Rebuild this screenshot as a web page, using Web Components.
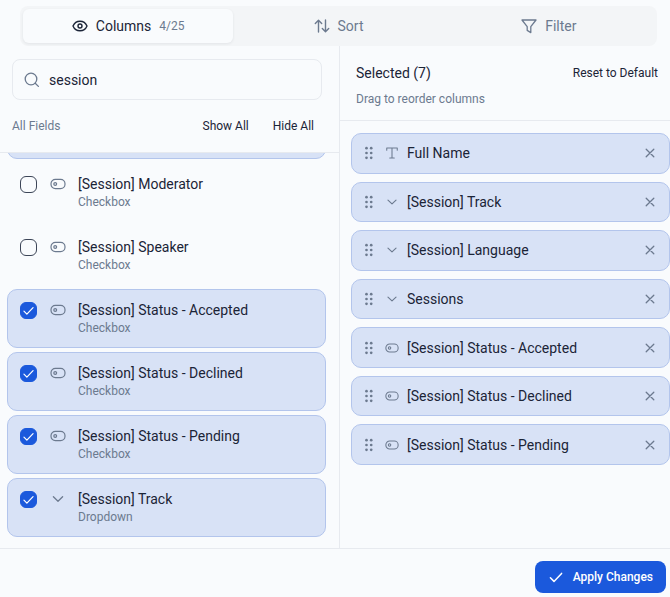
<!DOCTYPE html>
<html lang="en">
<head>
<meta charset="utf-8">
<title>Manage columns</title>
<style>
  :root {
    --bg: #f9fbfd;
    --line: #e7eaef;
    --ink: #1b2437;
    --muted: #6c7a8f;
    --accent: #1b59dc;
    --row: #d8e2f6;
    --row-line: #b3c5ec;
  }
  body { margin: 0; background: var(--bg); color: var(--ink); font: 14px/20px Roboto, "Liberation Sans", sans-serif; }
</style>
</head>
<body>
<column-dialog>
  <tab-bar slot="tabs">
    <tab-button icon="eye" active count="4/25">Columns</tab-button>
    <tab-button icon="sort">Sort</tab-button>
    <tab-button icon="filter">Filter</tab-button>
  </tab-bar>
  <fields-panel slot="fields" query="session">
    <field-row icon="chevron" kind="Dropdown" checked>[Session] Language</field-row>
    <field-row icon="toggle" kind="Checkbox">[Session] Moderator</field-row>
    <field-row icon="toggle" kind="Checkbox">[Session] Speaker</field-row>
    <field-row icon="toggle" kind="Checkbox" checked>[Session] Status - Accepted</field-row>
    <field-row icon="toggle" kind="Checkbox" checked>[Session] Status - Declined</field-row>
    <field-row icon="toggle" kind="Checkbox" checked>[Session] Status - Pending</field-row>
    <field-row icon="chevron" kind="Dropdown" checked>[Session] Track</field-row>
  </fields-panel>
  <selected-panel slot="selected">
    <selected-row icon="text">Full Name</selected-row>
    <selected-row icon="chevron">[Session] Track</selected-row>
    <selected-row icon="chevron">[Session] Language</selected-row>
    <selected-row icon="chevron">Sessions</selected-row>
    <selected-row icon="toggle">[Session] Status - Accepted</selected-row>
    <selected-row icon="toggle">[Session] Status - Declined</selected-row>
    <selected-row icon="toggle">[Session] Status - Pending</selected-row>
  </selected-panel>
  <apply-button slot="footer">Apply Changes</apply-button>
</column-dialog>

<script>
const ICONS = {
  eye: [16, 1.4, '<path d="M1 8c1.2-2.8 3.6-4.8 7-4.8S13.800 5.200 15 8c-1.200 2.800-3.600 4.800-7 4.800S2.200 10.800 1 8z"/><circle cx="8" cy="8" r="2"/>'],
  sort: [16, 1.4, '<path d="M4.500 14V2.500M1.300 5.500l3.200-3.200 3.200 3.200M11.500 2v11.500M8.300 10.500l3.200 3.200 3.200-3.200"/>'],
  filter: [16, 1.3, '<path d="M1 2h14L9.800 8.600v6l-3.600-2.200V8.600z"/>'],
  search: [16, 1.3, '<circle cx="7" cy="7" r="5.800"/><path d="M11.200 11.200l3.200 3.200"/>'],
  toggle: [16, 1.2, '<rect x="1" y="3.400" width="14" height="9.200" rx="4.400"/><circle cx="5.200" cy="8" r="1.400"/>'],
  chevron: [16, 1.3, '<path d="M3.400 5.800L8 10.200l4.600-4.400"/>'],
  text: [16, 1.2, '<path d="M2 4.800V2.200h12v2.600M8 2.200v11.600M5.400 13.800h5.200"/>'],
  close: [16, 1.3, '<path d="M4.200 4.200l7.600 7.600M11.800 4.200l-7.600 7.600"/>'],
  check: [16, 1.5, '<path d="M2.400 8.800l3.600 3.600 7.600-8"/>'],
  grip: [16, 0, '<g fill="currentColor"><circle cx="5.500" cy="3.200" r="1.350"/><circle cx="10.200" cy="3.200" r="1.350"/><circle cx="5.500" cy="8" r="1.350"/><circle cx="10.200" cy="8" r="1.350"/><circle cx="5.500" cy="12.800" r="1.350"/><circle cx="10.200" cy="12.800" r="1.350"/></g>']
};

class BaseElement extends HTMLElement {
  connectedCallback() {
    if (this.shadowRoot) return;
    this.attachShadow({ mode: 'open' }).innerHTML =
      '<style>*{box-sizing:border-box}button,input{font:inherit;color:inherit}button{border:0;background:none;padding:0;cursor:pointer}' +
      this.css() + '</style>' + this.html();
  }
}

customElements.define('line-icon', class extends BaseElement {
  css() { return ':host{display:block;flex:none;width:16px;height:16px}svg{display:block;width:100%;height:100%}'; }
  html() {
    const [box, stroke, shape] = ICONS[this.getAttribute('name')];
    return `<svg viewBox="0 0 ${box} ${box}" fill="none" stroke="currentColor" stroke-width="${stroke}" stroke-linecap="round" stroke-linejoin="round" aria-hidden="true">${shape}</svg>`;
  }
});

customElements.define('column-dialog', class extends BaseElement {
  css() { return `
    :host{display:flex;flex-direction:column;height:100vh;overflow:hidden}
    header{padding:6px 13px 0 20px}
    main{flex:1;min-height:0;display:grid;grid-template-columns:340fr 330fr;grid-template-rows:minmax(0,1fr)}
    footer{display:flex;justify-content:flex-end;padding:12px 4px 4px;border-top:1px solid var(--line)}`; }
  html() { return '<header><slot name="tabs"></slot></header><main><slot name="fields"></slot><slot name="selected"></slot></main><footer><slot name="footer"></slot></footer>'; }
});

customElements.define('tab-bar', class extends BaseElement {
  css() { return ':host{display:block}nav{display:grid;grid-template-columns:repeat(3,1fr);padding:3px;border-radius:8px;background:#f3f5f7}'; }
  html() { return '<nav><slot></slot></nav>'; }
});

customElements.define('tab-button', class extends BaseElement {
  css() { return `
    :host{display:block;color:var(--muted)}
    :host([active]){color:var(--ink)}
    button{display:flex;align-items:center;justify-content:center;gap:8px;width:100%;height:34px;border-radius:6px}
    :host([active]) button{background:var(--bg);box-shadow:0 1px 3px #1b243714}
    small{font-size:12px;color:var(--muted)}`; }
  html() {
    const count = this.getAttribute('count');
    return `<button type="button"><line-icon name="${this.getAttribute('icon')}"></line-icon><span><slot></slot></span>${count ? `<small>${count}</small>` : ''}</button>`;
  }
});

customElements.define('fields-panel', class extends BaseElement {
  css() { return `
    :host{display:flex;flex-direction:column;min-width:0;border-right:1px solid var(--line)}
    .top{padding:13px 17px 16px 12px;border-bottom:1px solid var(--line)}
    label{display:flex;align-items:center;gap:9px;height:41px;padding:0 11px;border:1px solid var(--line);border-radius:8px}
    label line-icon{color:var(--muted)}
    input{flex:1;min-width:0;border:0;outline:0;padding:0;background:none}
    .bar{display:flex;align-items:center;gap:24px;padding:16px 8px 0 0;font-size:12px}
    .bar span{flex:1;color:var(--muted)}
    .list{flex:1;min-height:0;overflow:hidden;display:flex;flex-direction:column;justify-content:flex-end;gap:4px;padding:0 13px 11px 7px}`; }
  html() { return `<div class="top"><label><line-icon name="search"></line-icon><input type="text" aria-label="Search fields" value="${this.getAttribute('query')}"></label>
    <div class="bar"><span>All Fields</span><button type="button">Show All</button><button type="button">Hide All</button></div></div>
    <div class="list"><slot></slot></div>`; }
});

customElements.define('field-row', class extends BaseElement {
  css() { return `
    :host{display:block;flex:none}
    label{display:grid;grid-template-columns:17px 17px 1fr;column-gap:12px;height:59px;padding:10px 12px;border:1px solid transparent;border-radius:10px}
    :host([checked]) label{background:var(--row);border-color:var(--row-line)}
    .box{display:grid;place-items:center;height:20px}
    .box > *{grid-area:1/1}
    input{appearance:none;width:17px;height:17px;margin:0;border:1px solid #3c4557;border-radius:6px}
    input:checked{background:var(--accent);border-color:var(--accent)}
    .box line-icon{width:13px;height:13px;color:#fff;visibility:hidden;pointer-events:none}
    input:checked + line-icon{visibility:visible}
    .kind{height:20px;display:grid;place-items:center;color:var(--muted)}
    small{display:block;font-size:12px;line-height:16px;color:var(--muted)}`; }
  html() {
    return `<label><span class="box"><input type="checkbox"${this.hasAttribute('checked') ? ' checked' : ''}><line-icon name="check"></line-icon></span>
      <span class="kind"><line-icon name="${this.getAttribute('icon')}"></line-icon></span>
      <span><slot></slot><small>${this.getAttribute('kind')}</small></span></label>`;
  }
});

customElements.define('selected-panel', class extends BaseElement {
  css() { return `
    :host{display:flex;flex-direction:column;min-width:0}
    header{padding:17px 12px 11px 16px;border-bottom:1px solid var(--line)}
    .title{display:flex;justify-content:space-between;align-items:center}
    h2{margin:0;font:inherit}
    button,p{font-size:12px}
    p{margin:6px 0 0;color:var(--muted)}
    .list{flex:1;min-height:0;display:flex;flex-direction:column;gap:8px;padding:12px 0 83px 11px}`; }
  html() { return `<header><div class="title"><h2>Selected (7)</h2><button type="button">Reset to Default</button></div><p>Drag to reorder columns</p></header>
    <div class="list"><slot></slot></div>`; }
});

customElements.define('selected-row', class extends BaseElement {
  css() { return `
    :host{display:flex;flex:1;align-items:center;padding:0 11px 0 9px;border:1px solid var(--row-line);border-radius:10px;background:var(--row);box-sizing:border-box}
    line-icon{color:var(--muted)}
    .kind{width:14px;height:14px;margin:0 8px}
    .name{flex:1}
    .grip{cursor:grab}`; }
  html() { return `<line-icon class="grip" name="grip"></line-icon><line-icon class="kind" name="${this.getAttribute('icon')}"></line-icon>
    <span class="name"><slot></slot></span><button type="button" aria-label="Remove"><line-icon name="close"></line-icon></button>`; }
});

customElements.define('apply-button', class extends BaseElement {
  css() { return `
    :host{display:block}
    button{display:flex;align-items:center;gap:9px;height:32px;padding:0 13px;border-radius:8px;background:var(--accent);color:#fff;font-size:12px;font-weight:500}`; }
  html() { return '<button type="button"><line-icon name="check"></line-icon><slot></slot></button>'; }
});
</script>
</body>
</html>
